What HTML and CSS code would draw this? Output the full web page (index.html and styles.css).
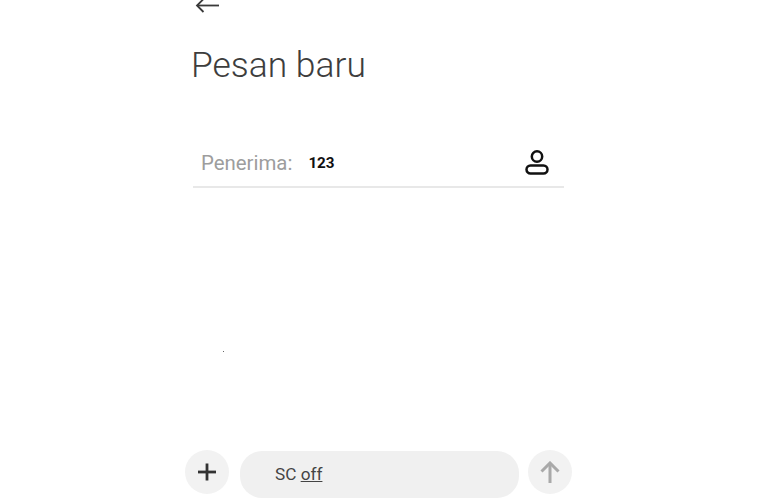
FILE: index.html
```html
<!DOCTYPE html>
<html lang="id">
  <head>
    <meta charset="UTF-8" />
    <meta name="viewport" content="width=device-width, initial-scale=1.0" />
    <title>Pesan baru</title>
    <link rel="stylesheet" href="styles.css">
  </head>
  <body>
    <main class="screen">
      <header class="top">
        <svg class="back" width="24" height="14" viewBox="0 0 24 14" fill="none" stroke="#3a3a3a" stroke-width="1.8">
          <path d="M24 6.5H2" />
          <path d="M8.5 0L2 6.5L8.5 13" />
        </svg>
        <h1 class="title">Pesan baru</h1>
      </header>

      <div class="recipient">
        <span class="recipient-label">Penerima:</span>
        <span class="recipient-value">123</span>
        <svg class="contact" width="24" height="25" viewBox="0 0 24 25" fill="none" stroke="#111" stroke-width="2.5">
          <circle cx="12" cy="6.5" r="5.2" />
          <rect x="1.5" y="15.5" width="21" height="8" rx="4" />
        </svg>
      </div>

      <div class="speck-row"><span class="speck"></span></div>

      <footer class="composer">
        <button class="round-btn">
          <svg width="20" height="20" viewBox="0 0 20 20" stroke="#333" stroke-width="2.8">
            <path d="M10 1.5V18.5" />
            <path d="M1 10H19" />
          </svg>
        </button>
        <div class="message">SC <u>off</u></div>
        <button class="round-btn">
          <svg width="20" height="22" viewBox="0 0 20 22" fill="none" stroke="#a9a9a9" stroke-width="3">
            <path d="M10 22V2" />
            <path d="M1.5 10.5L10 2L18.5 10.5" />
          </svg>
        </button>
      </footer>
    </main>
  </body>
</html>
```

FILE: styles.css
```css
* {
  margin: 0;
  padding: 0;
  box-sizing: border-box;
}

html,
body {
  height: 100%;
  overflow: hidden;
}

body {
  background: #fff;
  font-family: Roboto, "Liberation Sans", sans-serif;
}

.screen {
  width: 387px;
  height: 500px;
  margin-left: 185px;
  display: flex;
  flex-direction: column;
}

.top {
  height: 141px;
  padding-left: 6px;
}

.back {
  display: block;
  margin: -1px 0 0 4px;
}

.title {
  margin-top: 30px;
  font-size: 35.4px;
  line-height: 44px;
  font-weight: 300;
  color: #3d3d3d;
}

.recipient {
  width: 371px;
  height: 47px;
  margin-left: 8px;
  padding: 0 15px 1px 8px;
  display: flex;
  align-items: center;
  gap: 16px;
  border-bottom: 2px solid #e8e8e8;
}

.recipient-label {
  font-size: 20.4px;
  color: #9d9d9d;
}

.recipient-value {
  font-size: 15.2px;
  font-weight: 700;
  color: #111;
}

.contact {
  margin-left: auto;
  margin-bottom: 2px;
}

.speck-row {
  flex: 1;
  padding: 163px 0 0 38px;
}

.speck {
  display: block;
  width: 1px;
  height: 1px;
  background: #666;
}

.composer {
  height: 50px;
  display: flex;
  align-items: flex-start;
}

.round-btn {
  width: 44px;
  height: 44px;
  border: none;
  border-radius: 50%;
  background: #f2f2f2;
  display: flex;
  align-items: center;
  justify-content: center;
}

.message {
  width: 279px;
  height: 47px;
  margin: 1px 9px 0 11px;
  padding-left: 35px;
  border-radius: 22px;
  background: #f0f0f0;
  font-size: 17.2px;
  line-height: 46px;
  color: #444;
}
```
